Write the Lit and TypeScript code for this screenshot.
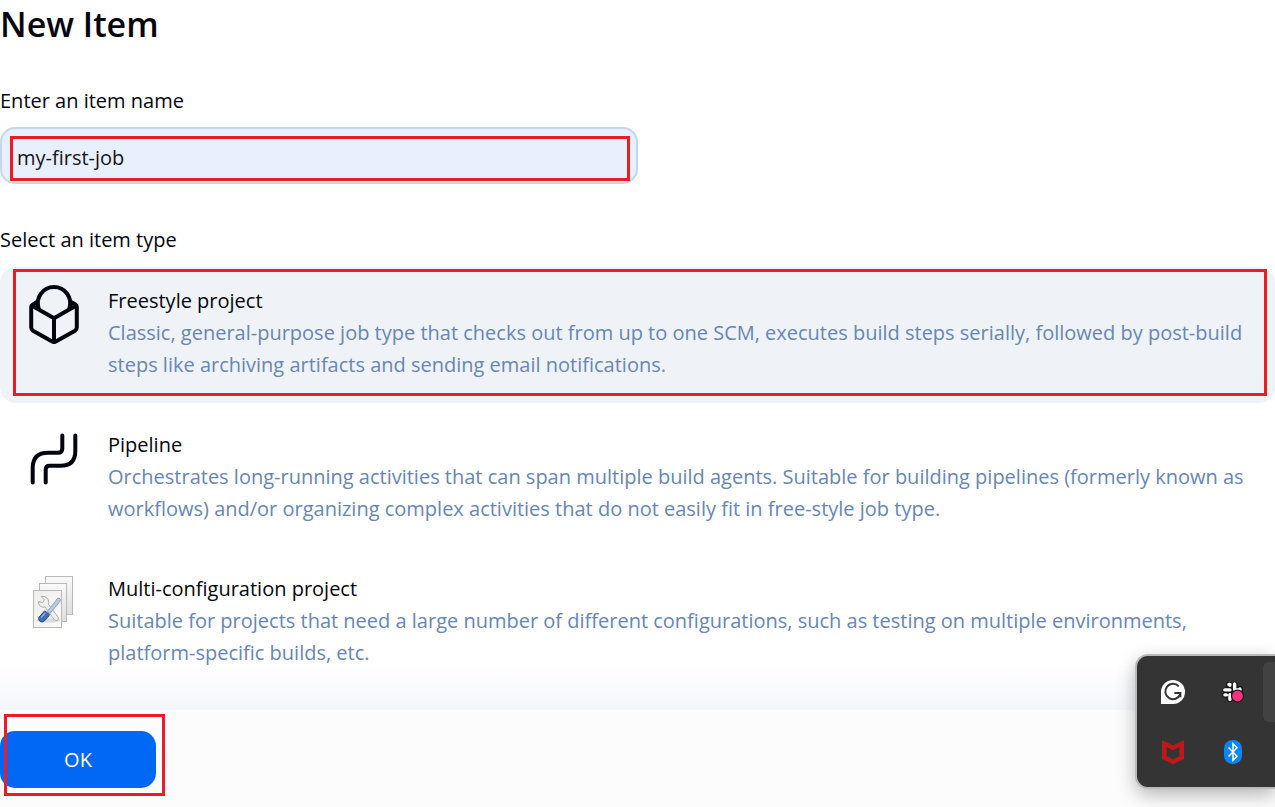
import { LitElement, html, css, svg } from "lit";
import { customElement, property, state } from "lit/decorators.js";
import { classMap } from "lit/directives/class-map.js";

const freestyleIcon = svg`
  <svg viewBox="0 0 60 60" width="60" height="60" fill="none" stroke="#05050f" stroke-width="4"
    stroke-linejoin="round" stroke-linecap="round" aria-hidden="true">
    <path d="M14.600 23.300A16.200 16.200 0 1 1 45.400 23.300"/>
    <path d="M13.200 17.500L14 22M46.800 17.500L46 22" stroke-width="3.600"/>
    <path d="M13 17L8.600 19.600Q7.200 20.400 7.200 22.200V42.500Q7.200 44.600 9 45.700L28.200 56.600Q30 57.600 31.800 56.600L51 45.700Q52.800 44.600 52.800 42.500V22.200Q52.800 20.400 51.400 19.600L47 17"/>
    <path d="M8.200 20.800L30 33.300L51.800 20.800M30 33.300V57"/>
  </svg>`;

const pipelineIcon = svg`
  <svg viewBox="0 0 60 60" width="60" height="60" fill="none" stroke="#05050f" stroke-width="4"
    stroke-linejoin="round" stroke-linecap="round" aria-hidden="true">
    <path d="M8.700 53.500V39Q8.700 23.800 23.900 23.800H34Q38.300 23.800 38.300 19.500V6.500"/>
    <path d="M21.700 53.500V40.500Q21.700 36.800 25.500 36.800H36.500Q51.300 36.800 51.300 22V6.500"/>
  </svg>`;

const matrixIcon = svg`
  <svg viewBox="0 0 60 60" width="60" height="60" aria-hidden="true">
    <defs>
      <linearGradient id="sheet" x1="0" y1="0" x2="1" y2="1">
        <stop offset="0" stop-color="#eeeeec"/><stop offset="1" stop-color="#fbfbfb"/>
      </linearGradient>
      <linearGradient id="under" x1="0" y1="0" x2="0" y2="1">
        <stop offset="0" stop-color="#fafafa"/><stop offset="1" stop-color="#dedede"/>
      </linearGradient>
    </defs>
    <g stroke="#b9bab8" stroke-width="1">
      <rect x="21.500" y="3.500" width="27" height="38" fill="url(#under)"/>
      <rect x="15.500" y="10.500" width="27" height="38" fill="url(#under)"/>
      <rect x="9.500" y="17.500" width="28" height="37" fill="url(#sheet)"/>
    </g>
    <ellipse cx="24" cy="47.500" rx="12" ry="2" fill="#d9d9d9"/>
    <path d="M17.300 23.500l3 3.400-1.600 2.600-4-.8c-.6 3.600 2.600 6.300 6.300 5.200L30.200 46.600c2.300 2.500 5.600-.4 3.600-2.900L24.500 31.300c1.200-4.500-2.500-8.900-7.200-7.800z"
      fill="#f1f1f1" stroke="#a9aaa8" stroke-width="1"/>
    <path d="M33.500 25.300c2.200-.8 3.600 1 2.600 2.800l-3 3.900-7.300 8.600-2.700-2.300 7.300-8.500z" fill="#b7c7de" stroke="#8ea5c6" stroke-width="1"/>
    <path d="M20.700 37.800l4.700 3.800-1.300 2.500-4.200 4.300c-3 1.600-6.100-.9-5-4z" fill="#3e6fb5" stroke="#234d8c" stroke-width="1"/>
    <path d="M17.500 44l3.600-3.800" stroke="#8fb0de" stroke-width="1.400" stroke-linecap="round"/>
  </svg>`;

const writerIcon = svg`
  <svg viewBox="0 0 24 24" width="24" height="24" aria-hidden="true">
    <path d="M0 24V12A12 12 0 1 1 12 24z" fill="#fff"/>
    <path d="M17.800 6.400A7.700 7.700 0 1 0 19.200 14.400M20.400 13H13.400M19.400 12.500V17.200" fill="none" stroke="#333" stroke-width="2"/>
  </svg>`;

const chatIcon = svg`
  <svg viewBox="0 0 24 24" width="24" height="24" aria-hidden="true">
    <g stroke-linecap="round" fill="none">
      <g stroke="#111" stroke-width="5.600">
        <path d="M8.600 4.800H7.800M13.600 4.600V8.400M4.300 10.200H8.800M14 9.900H18.800M19 8.900V9.400M8.900 14.800V19.300M4.200 15H4.800"/>
      </g>
      <g stroke="#fff" stroke-width="3.400">
        <path d="M8.600 4.400H7.900M8.900 4.400V5.200M13.600 4V8.900M3.800 9.900H8.900M14 10H18.900M18.900 8.900V9.900M8.900 14.600V19.500M3.900 14.900H5.400"/>
      </g>
    </g>
    <circle cx="16.500" cy="16" r="6.500" fill="#111"/>
    <circle cx="16.500" cy="16" r="5.400" fill="#f5357b"/>
  </svg>`;

const shieldIcon = svg`
  <svg viewBox="0 0 24 24" width="24" height="24" aria-hidden="true">
    <path fill-rule="evenodd" fill="#c01818" d="M1 0L12 5.400 23 0V19L12 24 1 19zM5.600 7V16.200L12 19.200 18.400 16.200V7L12 10.200z"/>
  </svg>`;

const bluetoothIcon = svg`
  <svg viewBox="0 0 24 24" width="24" height="24" aria-hidden="true">
    <rect x="3" y="0" width="18" height="24" rx="8.500" fill="#0a84ff"/>
    <path d="M7.600 7.400L16 16.200 12 20.200V3.800L16 7.800 7.600 16.600" fill="none" stroke="#fff" stroke-width="1.500"/>
  </svg>`;

const itemTypes = [
  {
    id: "freestyle",
    name: "Freestyle project",
    text: "Classic, general-purpose job type that checks out from up to one SCM, executes build steps serially, followed by post-build steps like archiving artifacts and sending email notifications.",
    icon: freestyleIcon,
  },
  {
    id: "pipeline",
    name: "Pipeline",
    text: "Orchestrates long-running activities that can span multiple build agents. Suitable for building pipelines (formerly known as workflows) and/or organizing complex activities that do not easily fit in free-style job type.",
    icon: pipelineIcon,
  },
  {
    id: "matrix",
    name: "Multi-configuration project",
    text: "Suitable for projects that need a large number of different configurations, such as testing on multiple environments, platform-specific builds, etc.",
    icon: matrixIcon,
  },
];

@customElement("item-type")
class ItemType extends LitElement {
  @property({ attribute: false }) item = itemTypes[0];
  @property({ type: Boolean }) selected = false;

  static styles = css`
    :host { display: block; }
    .card {
      position: relative;
      display: flex;
      gap: 24px;
      padding: 18px 12px 22px 24px;
      border-radius: 16px;
      cursor: pointer;
    }
    .card.selected { background: #eff2f7; }
    .radio { position: absolute; opacity: 0; margin: 0; }
    .icon { flex: none; width: 60px; height: 60px; }
    .copy { flex: 1; min-width: 0; }
    .name, .text { display: block; line-height: 32px; }
    .name { color: #05050f; }
    .text { color: #6886b4; }
    .mark {
      position: absolute;
      inset: 2px 8px 7px 13px;
      border: 3px solid #ed1c24;
      pointer-events: none;
    }
  `;

  render() {
    return html`
      <label class=${classMap({ card: true, selected: this.selected })}>
        <input class="radio" type="radio" name="mode" .value=${this.item.id} .checked=${this.selected}
          @change=${() => this.dispatchEvent(new CustomEvent("pick", { detail: this.item.id }))} />
        <span class="icon">${this.item.icon}</span>
        <span class="copy">
          <span class="name">${this.item.name}</span>
          <span class="text">${this.item.text}</span>
        </span>
        ${this.selected ? html`<span class="mark"></span>` : ""}
      </label>
    `;
  }
}

@customElement("tray-flyout")
class TrayFlyout extends LitElement {
  static styles = css`
    :host {
      display: block;
      overflow: hidden;
      padding: 20px 0 20px 20px;
    }
    .panel {
      display: grid;
      grid-template-columns: 60px 60px 1fr;
      grid-template-rows: 60px 60px;
      padding: 6px 0 5px 6px;
      background: #343434;
      border: 2px solid #b9babb;
      border-right: 0;
      border-radius: 13px 0 0 13px;
      box-shadow: 0 6px 18px rgba(0, 0, 0, 0.28);
    }
    .app {
      display: grid;
      place-items: center;
      padding: 0;
      border: 0;
      background: none;
    }
    .hover { background: #424242; border-radius: 6px 0 0 6px; }
    svg { display: block; }
  `;

  render() {
    return html`
      <div class="panel">
        <button class="app" aria-label="Grammarly">${writerIcon}</button>
        <button class="app" aria-label="Slack">${chatIcon}</button>
        <button class="app hover" aria-label="More"></button>
        <button class="app" aria-label="McAfee">${shieldIcon}</button>
        <button class="app" aria-label="Bluetooth">${bluetoothIcon}</button>
      </div>
    `;
  }
}

@customElement("app-root")
class AppRoot extends LitElement {
  @state() private mode = "freestyle";

  static styles = css`
    :host {
      display: block;
      position: relative;
      min-height: 100vh;
      background: #fff;
      color: #05050f;
      font: 20px/32px "Open Sans", "Noto Sans", sans-serif;
    }
    * { box-sizing: border-box; }
    .title {
      margin: 0;
      font-size: 34px;
      font-weight: 600;
      line-height: 48px;
    }
    .caption { display: block; }
    .name-caption { margin-top: 37px; }
    .field {
      position: relative;
      width: 50%;
      margin-top: 10px;
    }
    .input {
      display: block;
      width: 100%;
      height: 57px;
      padding: 4px 16px 0 15px;
      border: 2px solid #c8d5eb;
      border-radius: 15px;
      background: #e8effd;
      color: #14141e;
      font: inherit;
      outline: 0;
    }
    .mark {
      position: absolute;
      border: 3px solid #ed1c24;
      pointer-events: none;
    }
    .field .mark { inset: 9px 8px 3px 10px; }
    .types-caption { margin: 40px 0 11px; }
    .types {
      display: flex;
      flex-direction: column;
      gap: 8px;
    }
    .footer {
      position: sticky;
      bottom: 0;
      margin-top: 19px;
      padding: 21px 0 19px;
      background: #fcfcfd;
    }
    .footer::before {
      content: "";
      position: absolute;
      inset: -44px 0 auto 0;
      height: 44px;
      background: linear-gradient(rgba(244, 245, 250, 0), #f4f5fa);
      pointer-events: none;
    }
    .action { position: relative; width: 156px; }
    .action .mark { inset: -17px -9px -8px 4px; }
    .ok {
      display: block;
      width: 100%;
      height: 57px;
      border: 0;
      border-radius: 15px;
      background: #0068f5;
      color: #fff;
      font: inherit;
    }
    .tray {
      position: absolute;
      right: 0;
      bottom: -2px;
      width: 160px;
    }
  `;

  render() {
    return html`
      <h1 class="title">New Item</h1>
      <label class="caption name-caption" for="name">Enter an item name</label>
      <div class="field">
        <input class="input" id="name" type="text" value="my-first-job" autocomplete="off" />
        <span class="mark"></span>
      </div>
      <div class="caption types-caption" id="types-caption">Select an item type</div>
      <div class="types" role="radiogroup" aria-labelledby="types-caption">
        ${itemTypes.map(
          (item) => html`<item-type .item=${item} .selected=${this.mode === item.id}
            @pick=${(e: CustomEvent) => (this.mode = e.detail)}></item-type>`
        )}
      </div>
      <div class="footer">
        <div class="action">
          <button class="ok" type="submit">OK</button>
          <span class="mark"></span>
        </div>
        <tray-flyout class="tray"></tray-flyout>
      </div>
    `;
  }
}
